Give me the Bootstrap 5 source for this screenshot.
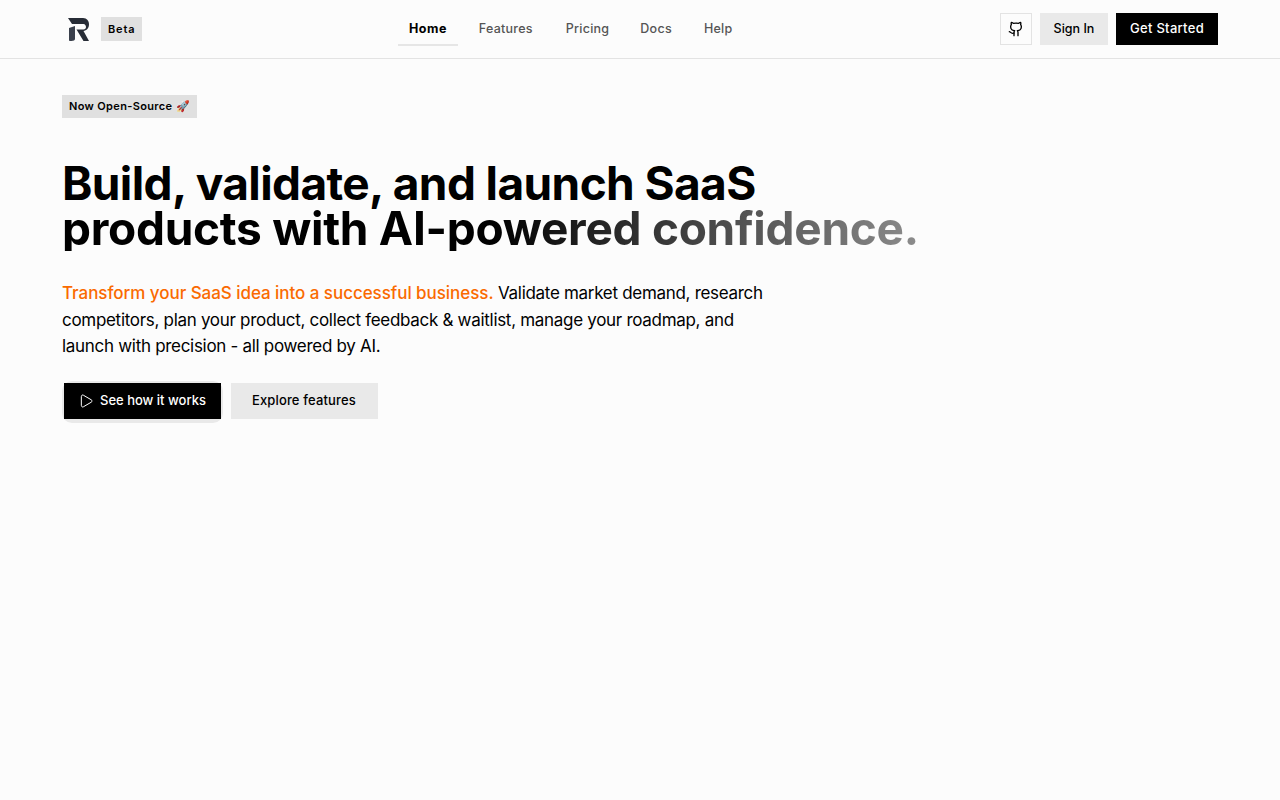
<!DOCTYPE html>
<html lang="en">
<head>
  <meta charset="UTF-8">
  <meta name="viewport" content="width=device-width, initial-scale=1.0">
  <title>SaaS launch</title>
  <link href="https://cdn.jsdelivr.net/npm/bootstrap@5.3.2/dist/css/bootstrap.min.css" rel="stylesheet">
  <style>
    body { background: #fcfcfc; color: #000; font-family: Inter, "Liberation Sans", sans-serif; min-height: 800px; }
    .top-bar { height: 59px; border-bottom: 1px solid #e3e3e3; padding: 0 62px; }
    .brand-mark { width: 32px; height: 32px; }
    .tag-chip { background: #e0e0e0; font-size: 11px; font-weight: 600; letter-spacing: .35px; color: #000; padding: 0 7px; align-items: center; }
    .beta-chip { display: inline-flex; height: 24px; margin-left: 7px; letter-spacing: .85px; }
    .main-links { position: absolute; left: 398px; top: 12px; }
    .main-links a { font-size: 12.500px; font-weight: 500; color: #555; text-decoration: none; padding: 2px 11px 0; height: 34px; display: flex; align-items: center; letter-spacing: .25px; margin-right: 10px; border-bottom: 2px solid transparent; }
    .main-links a.current { color: #000; font-weight: 700; letter-spacing: .5px; border-bottom-color: #e6e6e6; }
    .main-links a.wide-gap { margin-right: 11px; }
    .main-links a.tight-gap { margin-right: 9px; }
    .sq-btn, .flat-btn, .dark-btn { border-radius: 0; font-size: 13px; font-weight: 500; height: 32px; padding: 0 14px; display: inline-flex; align-items: center; }
    .sq-btn { width: 32px; padding: 0; justify-content: center; border: 1px solid #e3e3e3; background: #fcfcfc; }
    .flat-btn { background: #e9e9e9; color: #000; border: 0; }
    .dark-btn { background: #000; color: #fff; border: 0; letter-spacing: .3px; }
    .sign-btn { font-size: 12.500px; width: 68px; padding: 0; justify-content: center; }
    .hero { padding: 36px 62px 0; }
    .source-chip { display: flex; width: fit-content; height: 23px; }
    .hero h1 { font-size: 46px; line-height: 45px; font-weight: 700; margin: 43px 0 0; width: 900px; }
    .hero h1 span { display: block; width: fit-content; }
    .line-one { letter-spacing: -.6px; }
    .fade-text { letter-spacing: -.28px; background: linear-gradient(90deg, #000 0, #000 50%, #8c8c8c 100%); -webkit-background-clip: text; background-clip: text; color: transparent; }
    .intro { font-size: 17px; line-height: 26.500px; width: 720px; margin: 29px 0 0; letter-spacing: -.3px; }
    .intro b { color: #fa6a00; font-weight: 500; letter-spacing: -.05px; }
    .cta-row { margin-top: 23px; gap: 10px; }
    .cta-row .dark-btn, .cta-row .flat-btn { height: 36px; font-size: 13px; }
    .cta-wrap { position: relative; margin-left: 2px; display: flex; }
    .cta-wrap::before { content: ""; position: absolute; left: -2px; right: -2px; top: -2px; bottom: -4px; border-radius: 10px; background: #e9e9e9; }
    .cta-row .dark-btn { position: relative; padding: 0 15px 0 14px; gap: 6px; letter-spacing: 0; }
    .cta-row .flat-btn { padding: 0 22px 0 21px; letter-spacing: .15px; }
  </style>
</head>
<body>
  <header class="top-bar d-flex align-items-center justify-content-between position-relative">
    <div class="d-flex align-items-center">
      <svg class="brand-mark" viewBox="0 0 32 32">
        <path fill="#272c36" d="M6 5h15c4 0 6 3 6 6.500 0 3.500-2.500 6-5.500 6.500l5.500 10h-5.500l-7-11.500h7c1.500 0 2.500-1.200 2.500-2.500s-1-3-2.500-3H10z"/>
        <path fill="#3a404c" d="M7 15l6-2v13c0 1-1.500 2-3.500 2H8c-.6 0-1-.5-1-1z"/>
      </svg>
      <span class="tag-chip beta-chip">Beta</span>
    </div>
    <nav class="main-links d-flex">
      <a class="current" href="#">Home</a>
      <a class="wide-gap" href="#">Features</a>
      <a class="tight-gap" href="#">Pricing</a>
      <a href="#">Docs</a>
      <a href="#">Help</a>
    </nav>
    <div class="d-flex gap-2">
      <button class="btn sq-btn" aria-label="GitHub">
        <svg width="16" height="16" viewBox="0 0 24 24" fill="none" stroke="#000" stroke-width="2" stroke-linecap="round" stroke-linejoin="round">
          <path d="M15 22v-4a4.800 4.800 0 0 0-1-3.500c3 0 6-2 6-5.500.08-1.250-.27-2.480-1-3.500.28-1.150.28-2.350 0-3.500 0 0-1 0-3 1.500-2.640-.5-5.360-.5-8 0C6 2 5 2 5 2c-.3 1.150-.3 2.350 0 3.500A5.400 5.400 0 0 0 4 9c0 3.500 3 5.500 6 5.500-.39.490-.68 1.050-.85 1.650-.17.600-.22 1.230-.15 1.850v4"/>
          <path d="M9 18c-4.510 2-5-2-7-2"/>
        </svg>
      </button>
      <button class="btn flat-btn sign-btn">Sign In</button>
      <button class="btn dark-btn">Get Started</button>
    </div>
  </header>
  <main class="hero">
    <div class="tag-chip source-chip">Now Open-Source 🚀</div>
    <h1><span class="line-one">Build, validate, and launch SaaS</span><span class="fade-text">products with AI-powered confidence.</span></h1>
    <p class="intro"><b>Transform your SaaS idea into a successful business.</b> Validate market demand, research competitors, plan your product, collect feedback &amp; waitlist, manage your roadmap, and launch with precision - all powered by AI.</p>
    <div class="cta-row d-flex">
      <div class="cta-wrap">
        <button class="btn dark-btn">
          <svg width="16" height="16" viewBox="0 0 24 24" fill="none" stroke="#fff" stroke-width="1.500" stroke-linecap="round" stroke-linejoin="round"><path d="M5 5a2 2 0 0 1 3.008-1.728l11.997 6.998a2 2 0 0 1 .003 3.458l-12 7A2 2 0 0 1 5 19z"/></svg>
          See how it works
        </button>
      </div>
      <button class="btn flat-btn">Explore features</button>
    </div>
  </main>
  <script src="https://cdn.jsdelivr.net/npm/bootstrap@5.3.2/dist/js/bootstrap.bundle.min.js"></script>
</body>
</html>
